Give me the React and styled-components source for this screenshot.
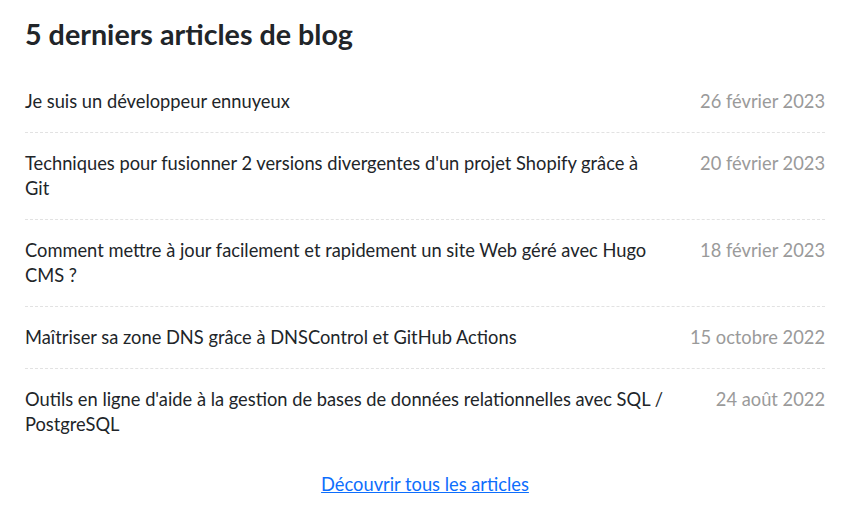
import styled, { createGlobalStyle } from "styled-components";

const Global = createGlobalStyle`
  body {
    margin: 0;
    background: #fff;
    font-family: Lato, "Noto Sans", sans-serif;
    color: #212529;
  }
`;

const Section = styled.section`
  width: 800px;
  padding: 16px 25px 0;
`;

const Title = styled.h2`
  margin: 0 0 19px;
  font-size: 28.7px;
  line-height: 36px;
  font-weight: 700;
  color: #212529;
`;

const List = styled.ul`
  list-style: none;
  margin: 0;
  padding: 0;
`;

const Row = styled.li`
  display: grid;
  grid-template-columns: 640px 1fr;
  padding: 18px 0;
  font-size: 18.3px;
  line-height: 25px;
  border-bottom: ${(p) => (p.last ? "none" : "1px dashed #e2e2e2")};
`;

const PostTitle = styled.a`
  color: #212529;
  text-decoration: none;
`;

const PostDate = styled.time`
  text-align: right;
  color: #9a9a9a;
  white-space: nowrap;
`;

const Footer = styled.div`
  text-align: center;
  margin-top: 17px;
  font-size: 18.3px;
  line-height: 25px;
`;

const MoreLink = styled.a`
  color: #0d6efd;
  text-decoration: underline;
`;

const posts = [
  ["Je suis un développeur ennuyeux", "26 février 2023"],
  ["Techniques pour fusionner 2 versions divergentes d'un projet Shopify grâce à Git", "20 février 2023"],
  ["Comment mettre à jour facilement et rapidement un site Web géré avec Hugo CMS ?", "18 février 2023"],
  ["Maîtriser sa zone DNS grâce à DNSControl et GitHub Actions", "15 octobre 2022"],
  ["Outils en ligne d'aide à la gestion de bases de données relationnelles avec SQL / PostgreSQL", "24 août 2022"],
];

export default function App() {
  return (
    <>
      <Global />
      <Section>
        <Title>5 derniers articles de blog</Title>
        <List>
          {posts.map(([title, date], i) => (
            <Row key={title} last={i === posts.length - 1}>
              <PostTitle href="#">{title}</PostTitle>
              <PostDate>{date}</PostDate>
            </Row>
          ))}
        </List>
        <Footer>
          <MoreLink href="#">Découvrir tous les articles</MoreLink>
        </Footer>
      </Section>
    </>
  );
}
